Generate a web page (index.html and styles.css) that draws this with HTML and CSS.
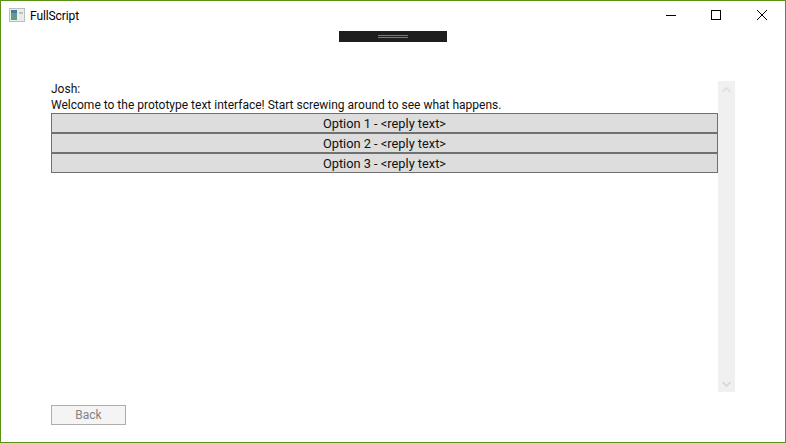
FILE: index.html
```html
<!DOCTYPE html>
<html lang="en">
<head>
<meta charset="utf-8">
<title>FullScript</title>
<link rel="stylesheet" href="styles.css">
</head>
<body>
<div class="window">
  <header class="titlebar">
    <svg class="app-icon" width="16" height="16" viewBox="0 0 16 16">
      <rect x="0.5" y="1.5" width="15" height="13" fill="#ececec" stroke="#bdbdbd"/>
      <rect x="2" y="3" width="6" height="10" fill="#5f9a8e"/>
      <rect x="2" y="3" width="6" height="3" fill="#4a7a9a"/>
      <rect x="10" y="3" width="4" height="10" fill="#e6ecea"/>
      <rect x="10" y="5" width="4" height="2" fill="#b4c6c2"/>
    </svg>
    <span class="app-title">FullScript</span>
    <div class="window-controls">
      <button class="control"><svg width="11" height="12" viewBox="0 0 11 12"><path d="M0 6.5H10" stroke="#000" fill="none"/></svg></button>
      <button class="control"><svg width="11" height="12" viewBox="0 0 11 12"><rect x="0.5" y="1.5" width="9" height="9" stroke="#000" fill="none"/></svg></button>
      <button class="control"><svg width="11" height="12" viewBox="0 0 11 12"><path d="M1 1L11 11M11 1L1 11" stroke="#000" fill="none"/></svg></button>
    </div>
  </header>
  <div class="handle-row">
    <div class="handle"><span class="grip"></span></div>
  </div>
  <main class="content">
    <div class="transcript">
      <p class="line">Josh:</p>
      <p class="line">Welcome to the prototype text interface! Start screwing around to see what happens.</p>
      <button class="option">Option 1 - &lt;reply text&gt;</button>
      <button class="option">Option 2 - &lt;reply text&gt;</button>
      <button class="option">Option 3 - &lt;reply text&gt;</button>
    </div>
    <div class="scrollbar">
      <svg width="9" height="6" viewBox="0 0 9 6"><path d="M0.5 5L4.5 1L8.5 5" stroke="#dcdcdc" stroke-width="1.3" fill="none"/></svg>
      <svg width="9" height="6" viewBox="0 0 9 6"><path d="M0.5 1L4.5 5L8.5 1" stroke="#d4d4d4" stroke-width="1.3" fill="none"/></svg>
    </div>
  </main>
  <footer class="footer">
    <button class="back" disabled>Back</button>
  </footer>
</div>
</body>
</html>
```
FILE: styles.css
```css
* { box-sizing: border-box; }
html, body { margin: 0; padding: 0; }
body {
  background: #fff;
  font-family: Roboto, "Open Sans", "Liberation Sans", sans-serif;
  font-size: 12px;
  color: #111;
}
.window {
  width: 786px;
  height: 443px;
  border: 1px solid #5a9216;
  display: flex;
  flex-direction: column;
  overflow: hidden;
}
.titlebar {
  height: 29px;
  flex: none;
  display: flex;
  align-items: flex-start;
  padding-left: 8px;
}
.app-icon { flex: none; margin: 6px 5px 0 0; }
.app-title { font-size: 12px; line-height: 16px; margin-top: 7px; letter-spacing: -0.1px; color: #000; }
.window-controls { margin-left: auto; display: flex; padding-right: 1px; }
.control {
  width: 45px;
  height: 28px;
  padding: 0;
  border: 0;
  background: none;
  display: flex;
  align-items: center;
  justify-content: center;
}
.handle-row {
  flex: none;
  display: flex;
  justify-content: center;
  padding-top: 1px;
}
.handle {
  width: 108px;
  height: 11px;
  background: #1e1e1e;
  display: flex;
  align-items: center;
  justify-content: center;
}
.grip {
  width: 30px;
  height: 3px;
  border-top: 1px solid #777;
  border-bottom: 1px solid #777;
}
.content {
  flex: none;
  display: flex;
  height: 311px;
  margin-top: 39px;
  padding-left: 50px;
}
.transcript { width: 667px; }
.line {
  margin: 0;
  height: 16px;
  line-height: 16px;
  white-space: nowrap;
}
.option {
  display: block;
  width: 100%;
  height: 20px;
  padding: 1px 0 0;
  border: 1px solid #707070;
  background: #dddddd;
  font: inherit;
  font-size: 12.8px;
  line-height: 18px;
  color: #111;
  text-align: center;
}
.scrollbar {
  width: 17px;
  background: #f0f0f0;
  display: flex;
  flex-direction: column;
  justify-content: space-between;
  align-items: center;
  padding: 6px 0 5px;
}
.footer {
  flex: none;
  margin-top: 13px;
  padding-left: 50px;
}
.back {
  display: block;
  width: 75px;
  height: 20px;
  padding: 0;
  border: 1px solid #adadad;
  background: #f4f4f4;
  font: inherit;
  line-height: 18px;
  color: #838383;
  text-align: center;
}
```
